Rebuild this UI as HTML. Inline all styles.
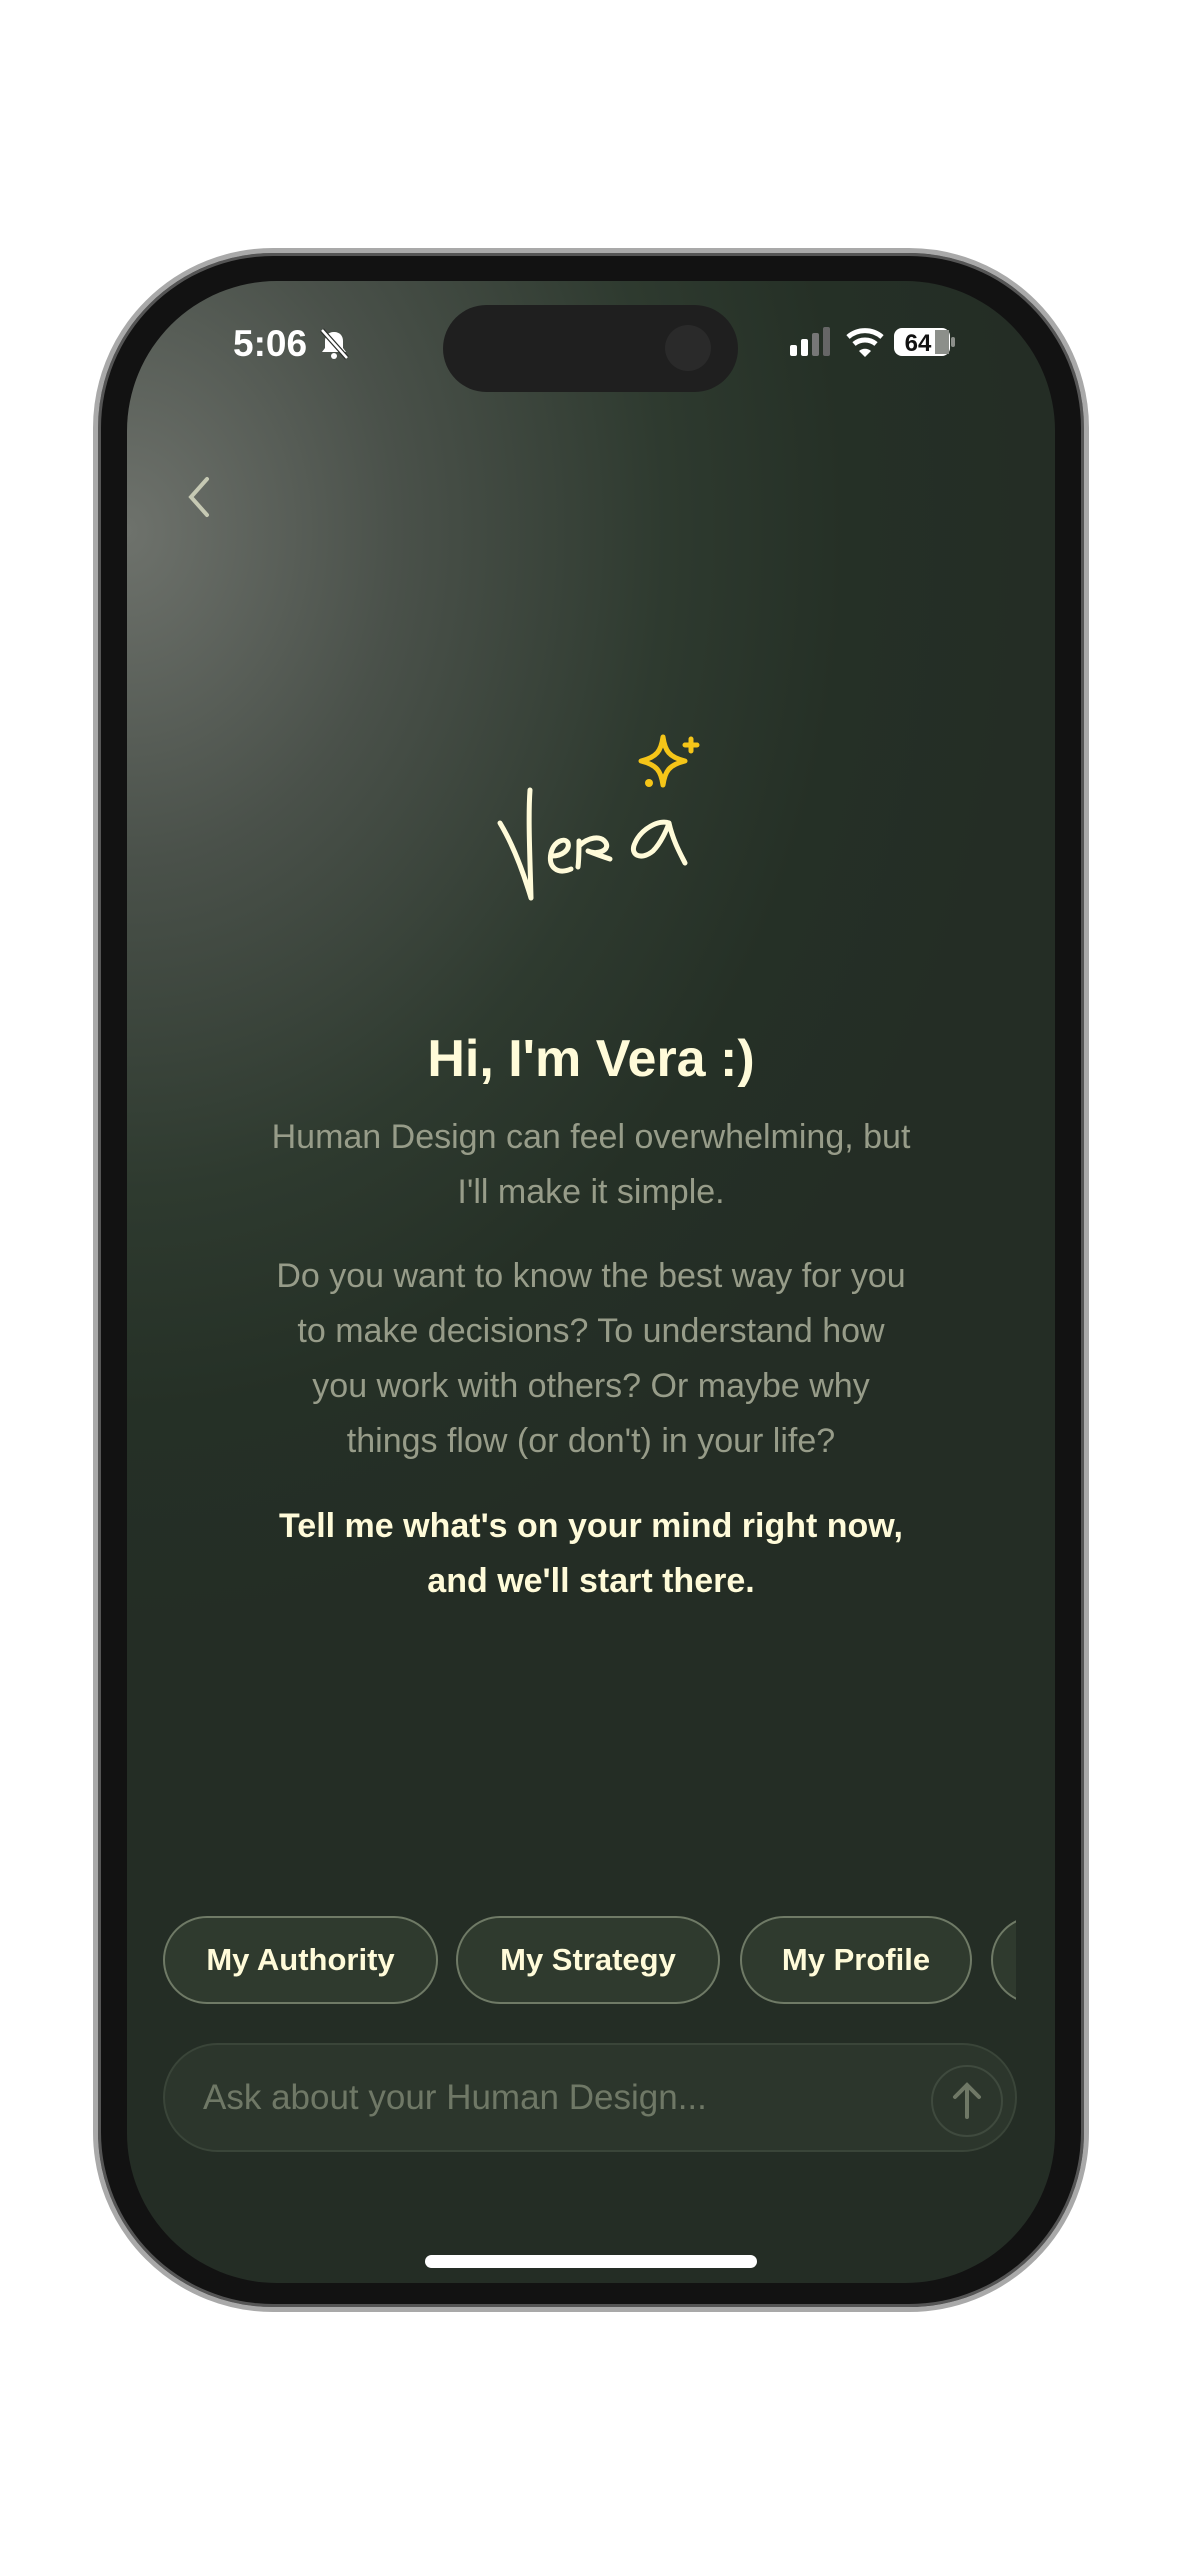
<!DOCTYPE html>
<html><head><meta charset="utf-8"><style>
*{margin:0;padding:0;box-sizing:border-box}
body{width:1182px;height:2562px;background:#fff;position:relative;overflow:hidden;font-family:"Liberation Sans",sans-serif}
.frame{position:absolute;left:93px;top:248px;width:996px;height:2064px;border-radius:180px;background:#121212;border:5px solid #a9a9a9;box-shadow:inset 0 0 0 3px #555}
.screen{position:absolute;left:127px;top:281px;width:928px;height:2002px;border-radius:150px;overflow:hidden;
background:radial-gradient(ellipse 900px 1100px at 0px 250px,#6e726c 0%,#4a514a 30%,#2e3a2f 60%,#253026 80%,#242d25 100%)}
.abs{position:absolute}
.island{left:316px;top:24px;width:295px;height:87px;border-radius:44px;background:#1f1f1f}
.cam{left:222px;top:20px;width:46px;height:46px;border-radius:50%;background:#2a2a2a}
.time{left:106px;top:42px;color:#fff;font-size:37px;font-weight:bold}
.c{position:absolute;left:0;width:928px;text-align:center}
h1{font-size:52px;color:#fffbd9;font-weight:bold}
.p{color:#979c89;font-size:34px;line-height:55px}
.b{color:#fffbd9;font-size:34px;line-height:55px;font-weight:bold}
.chip{position:absolute;top:1635px;height:88px;border:2px solid #6f7a66;border-radius:44px;background:#2f3a2e;color:#fffbd9;font-size:31px;font-weight:bold;display:flex;align-items:center;justify-content:center}
.input{left:36px;top:1762px;width:854px;height:109px;border-radius:55px;border:2px solid #3a4539;background:#2c362c;color:#6f7866;font-size:35px;padding-left:38px;line-height:105px}
.send{left:766px;top:20px;width:72px;height:72px;border-radius:50%;border:2px solid #3f4a3e}
.home{left:298px;top:1974px;width:332px;height:13px;border-radius:7px;background:#fff}
</style></head><body>
<div class="frame"></div>
<div class="screen">
 <div class="abs island"><div class="abs cam"></div></div>
 <div class="abs time">5:06 <svg width="34" height="32" viewBox="0 0 34 32" style="vertical-align:-4px"><path d="M17 4c-6 0-9 4-9 9v7l-3 4h24l-3-4v-7c0-5-3-9-9-9z" fill="#fff"/><circle cx="17" cy="28" r="3" fill="#fff"/><path d="M5 2l25 28" stroke="#2b2f2b" stroke-width="5"/><path d="M5 2l25 28" stroke="#fff" stroke-width="2.5"/></svg></div>
 <svg class="abs" style="left:663px;top:44px" width="170" height="36" viewBox="0 0 170 36">
  <rect x="0" y="20" width="7" height="11" rx="2" fill="#fff"/><rect x="11" y="14" width="7" height="17" rx="2" fill="#fff"/><rect x="22" y="8" width="7" height="23" rx="2" fill="#777"/><rect x="33" y="2" width="7" height="29" rx="2" fill="#666"/>
  <path d="M58 12a26 26 0 0 1 34 0" stroke="#fff" stroke-width="5" fill="none"/><path d="M64 19a17 17 0 0 1 22 0" stroke="#fff" stroke-width="5" fill="none"/><path d="M69 26l6 6 6-6a9 9 0 0 0-12 0z" fill="#fff"/>
  <rect x="104" y="3" width="56" height="28" rx="8" fill="#fff"/><rect x="145" y="5" width="14" height="24" fill="#8c8f8a"/><rect x="161" y="12" width="4" height="10" rx="2" fill="#8c8f8a"/>
  <text x="128" y="26" text-anchor="middle" font-family="Liberation Sans" font-weight="bold" font-size="24" fill="#111">64</text>
 </svg>
 <svg class="abs" style="left:56px;top:194px" width="30" height="44" viewBox="0 0 30 44"><path d="M24 4L8 22l16 18" stroke="#c6c9b3" stroke-width="4" fill="none" stroke-linecap="round"/></svg>
 <svg class="abs" style="left:360px;top:420px" width="250" height="200" viewBox="0 0 250 200">
  <g fill="none" stroke="#fffbd9" stroke-width="5" stroke-linecap="round" stroke-linejoin="round">
   <path d="M13 122c12 20 22 45 31 75M44 197c-1-40-3-80-1-108"/>
   <path d="M65 155c10 0 18-6 16-13-3-6-14-2-17 10-3 14 6 22 20 16"/>
   <path d="M92 140c0 10 0 18-1 26M92 145c8-8 22-12 27-3 4 8-10 12-18 8 10 4 16 6 22 8"/>
   <path d="M182 122c-10-4-28 6-34 20-6 12 6 18 18 8 8-8 14-22 16-28 4 18 12 32 16 40"/>
  </g>
  <g fill="none" stroke="#f5c518" stroke-width="5" stroke-linejoin="round" stroke-linecap="round">
   <path d="M176 36c2 14 6 20 22 24-16 4-20 10-22 24-2-14-6-20-22-24 16-4 20-10 22-24z"/>
   <path d="M204 38v12M198 44h12"/>
  </g>
  <circle cx="162" cy="82" r="4" fill="#f5c518"/>
 </svg>
 <div class="c" style="top:748px"><h1>Hi, I'm Vera :)</h1></div>
 <div class="c p" style="top:829px">Human Design can feel overwhelming, but<br>I'll make it simple.</div>
 <div class="c p" style="top:968px">Do you want to know the best way for you<br>to make decisions? To understand how<br>you work with others? Or maybe why<br>things flow (or don't) in your life?</div>
 <div class="c b" style="top:1218px">Tell me what's on your mind right now,<br>and we'll start there.</div>
 <div class="chip" style="left:36px;width:275px">My Authority</div>
 <div class="chip" style="left:329px;width:264px">My Strategy</div>
 <div class="chip" style="left:613px;width:232px">My Profile</div>
 <div style="position:absolute;left:864px;top:1635px;width:25px;height:88px;overflow:hidden"><div class="chip" style="left:0;top:0;width:200px"></div></div>
 <div class="abs input">Ask about your Human Design...
  <div class="abs send"><svg width="72" height="72" viewBox="0 0 72 72" style="position:absolute;left:-2px;top:-2px"><path d="M36 52V20M24 32l12-12 12 12" stroke="#6f7866" stroke-width="4" fill="none" stroke-linecap="round"/></svg></div>
 </div>
 <div class="abs home"></div>
</div>
</body></html>
